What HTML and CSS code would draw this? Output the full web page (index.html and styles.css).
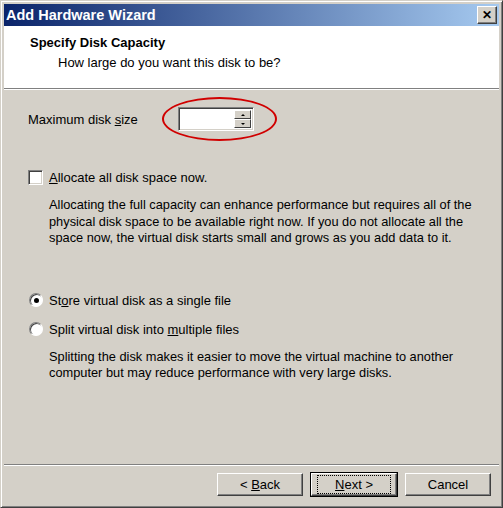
FILE: index.html
```html
<!DOCTYPE html>
<html lang="en">
<head>
    <meta charset="UTF-8">
    <title>Add Hardware Wizard</title>
    <link rel="stylesheet" href="styles.css">
</head>
<body>
    <div class="window">
        <div class="titlebar">
            <span class="title">Add Hardware Wizard</span>
            <span class="close">&#x2715;</span>
        </div>

        <div class="header">
            <div class="header-title">Specify Disk Capacity</div>
            <div class="header-sub">How large do you want this disk to be?</div>
        </div>

        <div class="content">
            <div class="size-row">
                <label class="size-label">Maximum disk <u>s</u>ize</label>
                <div class="spin-wrap">
                    <div class="spin">
                        <div class="spin-field"></div>
                        <div class="spin-buttons">
                            <div class="spin-btn"><span class="arrow-up"></span></div>
                            <div class="spin-btn"><span class="arrow-down"></span></div>
                        </div>
                    </div>
                    <!-- red marker drawn over the field -->
                    <div class="ring"></div>
                </div>
            </div>

            <div class="option check-row">
                <span class="checkbox"></span>
                <span><u>A</u>llocate all disk space now.</span>
            </div>
            <p class="note">Allocating the full capacity can enhance performance but requires all of the
                physical disk space to be available right now. If you do not allocate all the
                space now, the virtual disk starts small and grows as you add data to it.</p>

            <div class="option radio-row first-radio">
                <span class="radio checked"></span>
                <span>St<u>o</u>re virtual disk as a single file</span>
            </div>
            <div class="option radio-row">
                <span class="radio"></span>
                <span>Split virtual disk into <u>m</u>ultiple files</span>
            </div>
            <p class="note split-note">Splitting the disk makes it easier to move the virtual machine to another
                computer but may reduce performance with very large disks.</p>
        </div>

        <div class="footer">
            <button class="btn">&lt; <u>B</u>ack</button>
            <button class="btn default"><span class="focus"><u>N</u>ext &gt;</span></button>
            <button class="btn">Cancel</button>
        </div>
    </div>
</body>
</html>
```

FILE: styles.css
```css
/* Classic Windows wizard dialog */
html, body {
    margin: 0;
    padding: 0;
}
body {
    font-family: "Liberation Sans", Arial, sans-serif;
    font-size: 13px;
    color: #000;
    background: #d4d0c8;
}
.window {
    width: 503px;
    height: 508px;
    box-sizing: border-box;
    display: flex;
    flex-direction: column;
    background: #d4d0c8;
    border-top: 1px solid #d4d0c8;
    border-left: 1px solid #d4d0c8;
    border-right: 1px solid #404040;
    border-bottom: 1px solid #404040;
    box-shadow: inset 1px 1px 0 #fff, inset -1px -1px 0 #808080;
    padding: 3px;
}
.titlebar {
    height: 22px;
    display: flex;
    align-items: center;
    justify-content: space-between;
    padding: 0 2px 0 2px;
    background: linear-gradient(to right, #0a246a, #a6caf0);
    flex-shrink: 0;
}
.title {
    color: #fff;
    font-weight: bold;
    font-size: 14.5px;
}
.close {
    width: 20px;
    height: 18px;
    box-sizing: border-box;
    background: #d4d0c8;
    border-top: 1px solid #fff;
    border-left: 1px solid #fff;
    border-right: 1px solid #404040;
    border-bottom: 1px solid #404040;
    box-shadow: inset -1px -1px 0 #808080;
    font-size: 12px;
    font-weight: bold;
    line-height: 16px;
    text-align: center;
}
.header {
    height: 63px;
    background: #fff;
    box-sizing: border-box;
    padding: 9px 0 0 26px;
    border-bottom: 1px solid #808080;
    box-shadow: 0 1px 0 #fff;
    flex-shrink: 0;
}
.header-title {
    font-weight: bold;
    font-size: 13px;
}
.header-sub {
    margin-top: 5px;
    padding-left: 28px;
}
.content {
    flex: 1;
    padding: 18px 0 0 24px;
}
.size-row {
    display: flex;
    align-items: center;
}
.size-label {
    width: 150px;
}
.spin-wrap {
    position: relative;
}
.spin {
    width: 76px;
    height: 24px;
    box-sizing: border-box;
    display: flex;
    background: #fff;
    border-top: 1px solid #808080;
    border-left: 1px solid #808080;
    border-right: 1px solid #fff;
    border-bottom: 1px solid #fff;
    box-shadow: inset 1px 1px 0 #404040, inset -1px -1px 0 #d4d0c8;
    padding: 2px;
}
.spin-field {
    flex: 1;
}
.spin-buttons {
    width: 17px;
    display: flex;
    flex-direction: column;
}
.spin-btn {
    flex: 1;
    box-sizing: border-box;
    background: #d4d0c8;
    border-top: 1px solid #fff;
    border-left: 1px solid #fff;
    border-right: 1px solid #404040;
    border-bottom: 1px solid #404040;
    display: flex;
    align-items: center;
    justify-content: center;
}
.arrow-up, .arrow-down {
    width: 0;
    height: 0;
    border-left: 2px solid transparent;
    border-right: 2px solid transparent;
}
.arrow-up {
    border-bottom: 2px solid #000;
}
.arrow-down {
    border-top: 2px solid #000;
}
.ring {
    position: absolute;
    left: -16px;
    top: -10px;
    width: 111px;
    height: 40px;
    border: 2px solid #d00000;
    border-radius: 50%;
}
.option {
    display: flex;
    align-items: center;
    gap: 6px;
}
.check-row {
    margin-top: 39px;
}
.checkbox {
    width: 15px;
    height: 15px;
    box-sizing: border-box;
    background: #fff;
    border-top: 1px solid #808080;
    border-left: 1px solid #808080;
    border-right: 1px solid #fff;
    border-bottom: 1px solid #fff;
    box-shadow: inset 1px 1px 0 #404040, inset -1px -1px 0 #d4d0c8;
}
.radio {
    width: 14px;
    height: 14px;
    box-sizing: border-box;
    border-radius: 50%;
    background: #fff;
    border: 1px solid;
    border-color: #808080 #fff #fff #808080;
    box-shadow: inset 1px 1px 0 #404040;
    display: flex;
    align-items: center;
    justify-content: center;
}
.radio.checked::after {
    content: "";
    width: 5px;
    height: 5px;
    border-radius: 50%;
    background: #000;
}
.radio-row {
    padding-left: 1px;
    gap: 6px;
}
.first-radio {
    margin-top: 46px;
}
.radio-row + .radio-row {
    margin-top: 14px;
}
.note {
    margin: 12px 0 0 21px;
    line-height: 16.5px;
    width: 440px;
    font-size: 12.8px;
}
.split-note {
    margin-top: 12px;
}
.footer {
    height: 40px;
    flex-shrink: 0;
    border-top: 1px solid #808080;
    box-shadow: inset 0 1px 0 #fff;
    display: flex;
    justify-content: flex-end;
    align-items: flex-start;
    gap: 8px;
    padding: 8px 8px 0 0;
    box-sizing: border-box;
}
.btn {
    width: 86px;
    height: 23px;
    padding: 0;
    font-family: "Liberation Sans", Arial, sans-serif;
    font-size: 13px;
    color: #000;
    background: #d4d0c8;
    border-top: 1px solid #fff;
    border-left: 1px solid #fff;
    border-right: 1px solid #404040;
    border-bottom: 1px solid #404040;
    box-shadow: inset -1px -1px 0 #808080;
}
.btn.default {
    outline: 1px solid #000;
}
.focus {
    display: inline-block;
    padding: 1px 17px;
    border: 1px dotted #000;
}
```
